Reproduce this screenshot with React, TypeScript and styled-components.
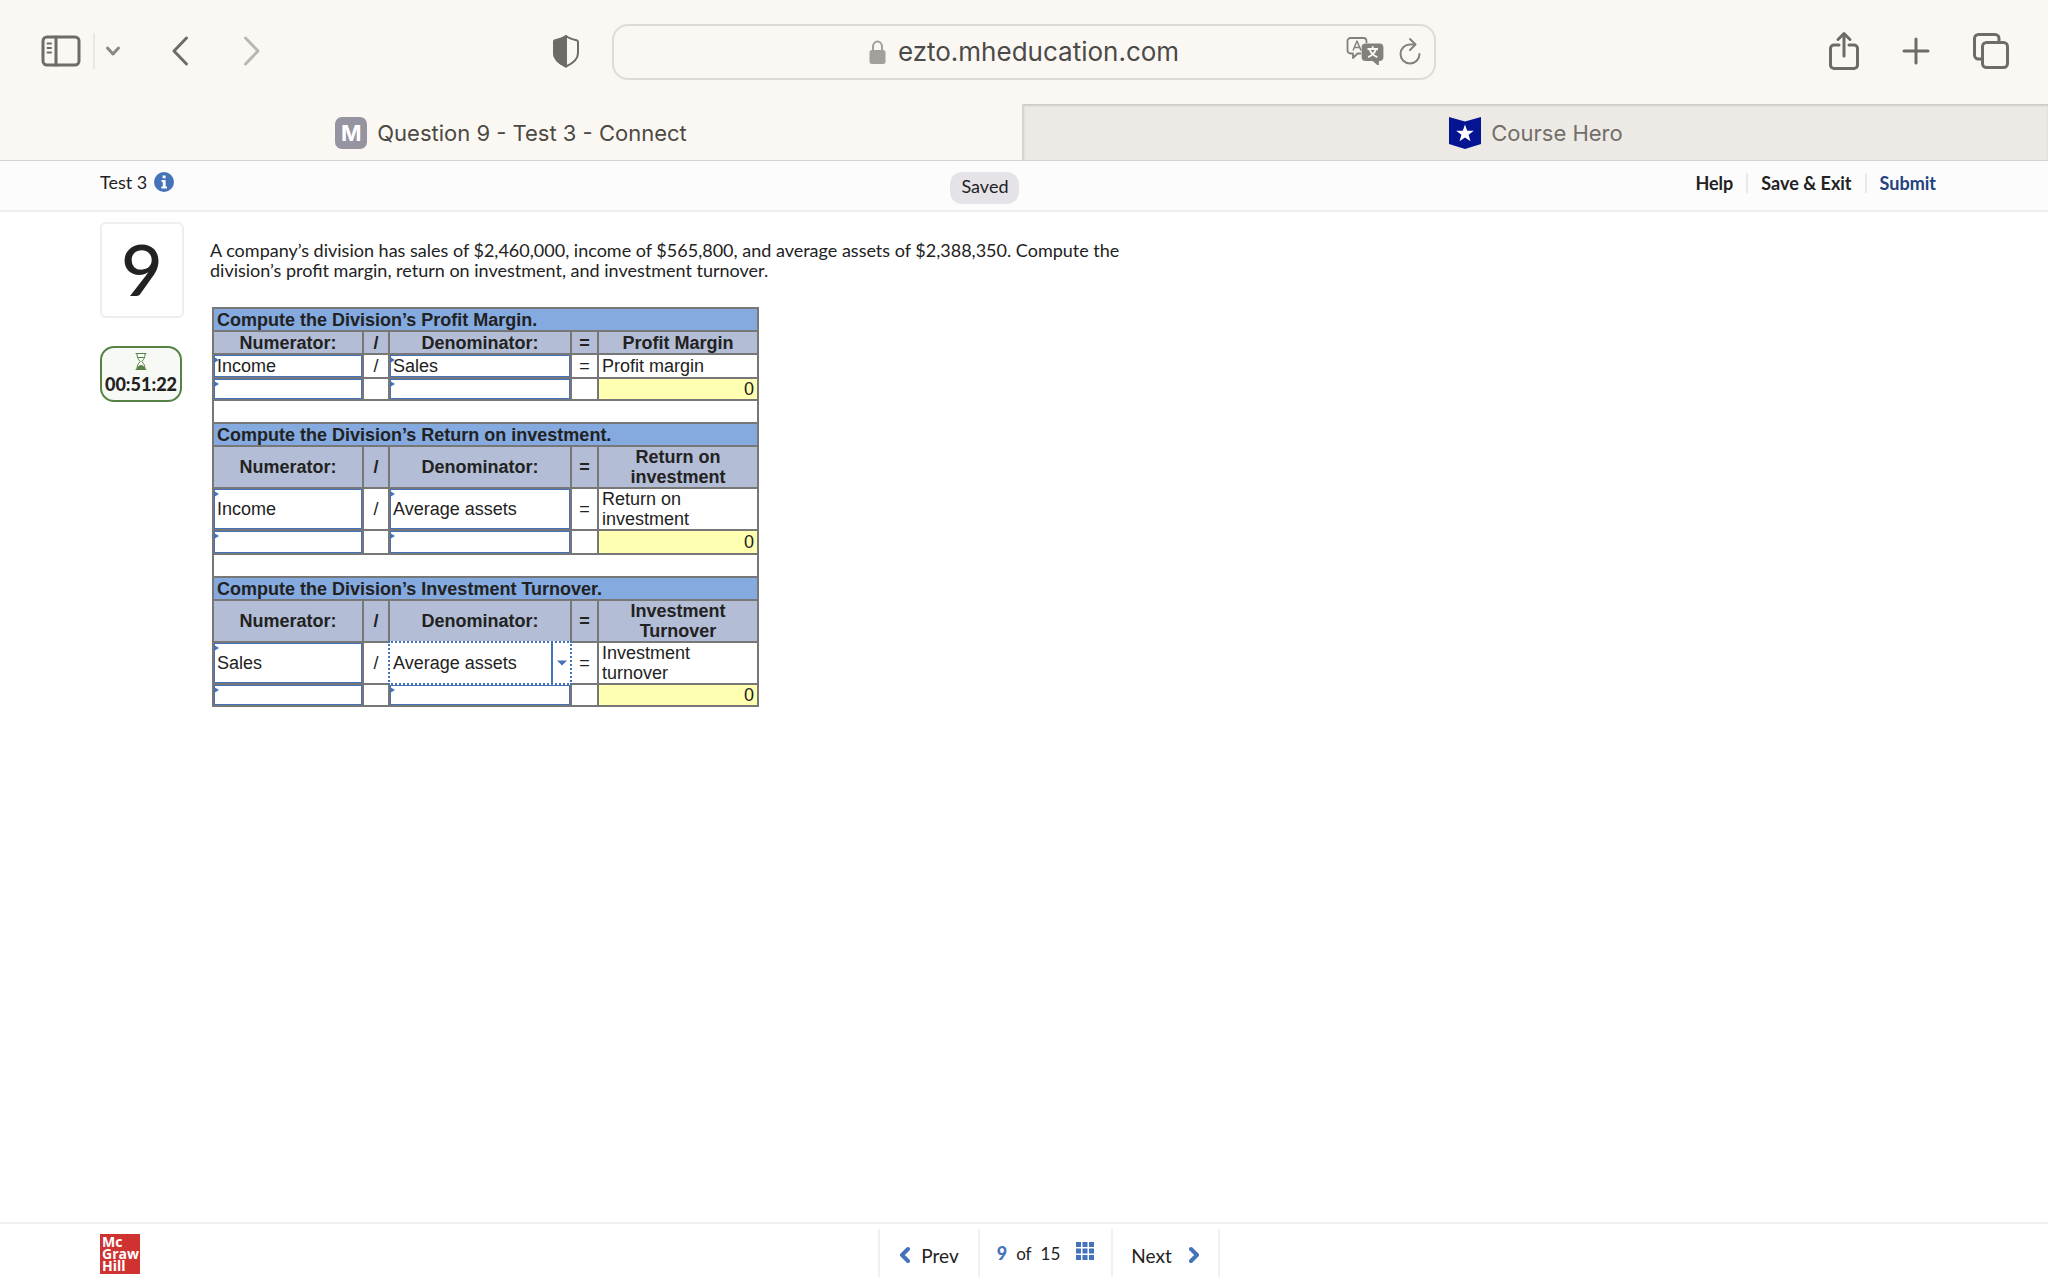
import React from 'react';
import styled, { createGlobalStyle, css } from 'styled-components';

const ui = `Inter, Roboto, "Liberation Sans", sans-serif`;
const page = `Lato, "Open Sans", sans-serif`;
const sheet = `"Liberation Sans", Arial, sans-serif`;
const blue = '#4473b9';
const rule = '#777777';

const GlobalStyle = createGlobalStyle`
  *, *::before, *::after { box-sizing: border-box; }
  body { margin: 0; background: #fff; color: #222; font-family: ${page}; }
  button, input, select { font: inherit; color: inherit; margin: 0; }
  button { background: none; border: 0; padding: 0; cursor: pointer; }
  svg { display: block; flex: none; }
`;

const Window = styled.div`
  min-height: 100vh;
  display: flex;
  flex-direction: column;
`;

/* Browser toolbar */
const Toolbar = styled.div`
  display: grid;
  grid-template-columns: 1fr minmax(400px, 824px) 1fr;
  align-items: center;
  height: 104px;
  padding: 0 38px;
  background: #fbf8f3;
  color: #6f6b66;
  font-family: ${ui};
`;

const ToolGroup = styled.div<{ $gap: number; $end?: boolean }>`
  display: flex;
  align-items: center;
  gap: ${(p) => p.$gap}px;
  ${(p) => p.$end && css`
    justify-content: flex-end;
    padding-bottom: 2px;
  `}
`;

const LeftTools = styled(ToolGroup)`
  justify-content: space-between;
  padding: 0 31px 2px 1px;
`;

const IconButton = styled.button<{ $dim?: boolean }>`
  display: flex;
  align-items: center;
  justify-content: center;
  color: inherit;
  opacity: ${(p) => (p.$dim ? 0.45 : 1)};
`;

const Bar = styled.span<{ $h: number }>`
  width: 2px;
  height: ${(p) => p.$h}px;
  background: #ebe9e6;
`;

const Address = styled.div`
  display: grid;
  grid-template-columns: 1fr auto 1fr;
  align-items: center;
  height: 56px;
  padding: 0 12px;
  border: 2px solid #dedbd6;
  border-radius: 16px;
  color: #4b4a49;
  font-size: 26px;
`;

const Site = styled.button`
  grid-column: 2;
  display: flex;
  align-items: center;
  gap: 12px;
  line-height: 32px;
`;

/* Browser tabs */
const Tabs = styled.nav`
  display: grid;
  grid-template-columns: 1022fr 1026fr;
  height: 57px;
  border-bottom: 1px solid #d6d5d3;
  background: #fbf8f3;
`;

const Tab = styled.button<{ $active?: boolean }>`
  display: flex;
  align-items: center;
  justify-content: center;
  gap: 10px;
  padding-top: 2px;
  font-family: ${ui};
  font-size: 22px;
  color: #4c4944;
  ${(p) =>
    !p.$active &&
    css`
      background: #edeae5;
      color: #726e69;
      border-left: 2px solid #d8d5d0;
      box-shadow: inset 0 2px 2px #cfccc6;
    `}
`;

const Letter = styled.span`
  display: grid;
  place-items: center;
  width: 32px;
  height: 32px;
  border-radius: 7px;
  background: #9594a0;
  color: #fff;
  font-size: 22px;
  font-weight: 700;
`;

/* Assignment header */
const Header = styled.header`
  display: grid;
  grid-template-columns: 850fr auto 916fr;
  height: 51px;
  padding: 10px 112px 0 100px;
  border-bottom: 2px solid #efefef;
  background: #fcfcfd;
  font-size: 18px;
  line-height: 22px;
`;

const Title = styled.div`
  display: flex;
  align-items: center;
  gap: 7px;
  height: 22px;
`;

const Saved = styled.div`
  height: 32px;
  margin-top: 1px;
  padding: 3px 11px;
  border-radius: 12px;
  background: #e5e3e7;
`;

const Actions = styled.nav`
  display: flex;
  align-items: center;
  justify-content: flex-end;
  gap: 13px;
  height: 24px;
`;

const Action = styled.button<{ $primary?: boolean }>`
  font-size: 18px;
  font-weight: 700;
  line-height: 24px;
  color: ${(p) => (p.$primary ? '#23427f' : '#222')};
`;

/* Question */
const Main = styled.main`
  flex: 1;
  display: flex;
  align-items: flex-start;
  gap: 26px;
  padding: 10px 100px 40px;
`;

const Side = styled.aside`
  display: flex;
  flex-direction: column;
  gap: 28px;
  width: 84px;
`;

const QuestionNumber = styled.div`
  display: flex;
  justify-content: center;
  height: 96px;
  border: 2px solid #eeeeee;
  border-radius: 6px;
  font-size: 72px;
  font-weight: 500;
  line-height: 88px;
`;

const Timer = styled.div`
  display: flex;
  flex-direction: column;
  align-items: center;
  width: 82px;
  height: 56px;
  padding-top: 4px;
  border: 2px solid #568345;
  border-radius: 14px;
  background: #f7f9f5;
  color: #568345;
`;

const Time = styled.span`
  font-size: 18px;
  font-weight: 900;
  line-height: 24px;
  color: #222;
`;

const Body = styled.div`
  flex: 1;
  padding-top: 18px;
`;

const Prompt = styled.p`
  max-width: 940px;
  margin: 0 0 27px;
  font-size: 18px;
  line-height: 20px;
`;

const Sheet = styled.table`
  width: 547px;
  margin-left: 2px;
  table-layout: fixed;
  border-collapse: collapse;
  font-family: ${sheet};
  font-size: 18px;
  line-height: 20px;

  th, td {
    padding: 0 3px;
    border: 2px solid ${rule};
  }
`;

const Col = styled.col<{ $w: number }>`
  width: ${(p) => p.$w}px;
`;

const Row = styled.tr<{ $h: number }>`
  height: ${(p) => p.$h}px;

  && > td { height: ${(p) => p.$h}px; }
`;

const Section = styled.th`
  background: #84aae0;
  text-align: left;
`;

const Heading = styled.th`
  background: #b3bdd6;
  text-align: center;
`;

const Sign = styled.td`
  text-align: center;
`;

const Result = styled.td`
  background: #ffffb1;
  text-align: right;
`;

const Entry = styled.td`
  && { padding: 0; }
`;

const Slot = styled.div<{ $focus?: boolean }>`
  position: relative;
  display: flex;
  height: 100%;
  ${(p) =>
    p.$focus
      ? css`
          padding-left: 1px;
          background: #fff;
          box-shadow: 0 0 0 2px #fff;
          outline: 2px dotted ${blue};
        `
      : css`
          border: 1px solid ${blue};

          &::before {
            content: '';
            position: absolute;
            top: 1px;
            left: -1px;
            width: 5px;
            height: 6px;
            background: ${blue};
            clip-path: polygon(0 0, 100% 50%, 0 100%);
          }
        `}
`;

const field = css`
  flex: 1;
  min-width: 0;
  height: 100%;
  padding: 0 2px;
  border: 0;
  outline: 0;
  background: transparent;
`;

const Choice = styled.select`
  ${field}
  appearance: none;
`;

const Amount = styled.input`
  ${field}
  font-size: 15px;
  line-height: 16px;
`;

const Drop = styled.span`
  display: grid;
  place-items: center;
  width: 19px;
  border-left: 2px solid ${blue};
  color: ${blue};
`;

/* Footer */
const Footer = styled.footer`
  display: grid;
  grid-template-columns: 1fr auto 1fr;
  height: 58px;
  padding: 5px 50px 0 100px;
  border-top: 2px solid #f0f0f0;
  font-size: 18px;
`;

const Logo = styled.div`
  width: 40px;
  height: 40px;
  margin-top: 5px;
  padding: 2px 2px;
  background: #cf3331;
  color: #fff;
  font-family: "Open Sans", sans-serif;
  font-size: 14px;
  font-weight: 700;
  line-height: 12px;
`;

const Pager = styled.nav`
  display: flex;
  height: 48px;
  border-left: 2px solid #f0f0f0;
`;

const PagerCell = styled.div<{ $w: number }>`
  display: flex;
  justify-content: center;
  width: ${(p) => p.$w}px;
  border-right: 2px solid #f0f0f0;
`;

const PagerButton = styled.button<{ $gap: number }>`
  display: flex;
  align-items: center;
  gap: ${(p) => p.$gap}px;
  height: 52px;
  font-size: 19px;
`;

const Position = styled.div`
  display: flex;
  align-items: center;
  gap: 9px;
  height: 48px;
  font-size: 17px;
`;

const Current = styled.b`
  color: ${blue};
  font-size: 18px;
  font-weight: 900;
`;

const GridButton = styled(IconButton)`
  margin: -4px 0 0 7px;
  color: ${blue};
`;

type IconProps = { w: number; h: number; sw?: number; children: React.ReactNode };
const Icon = ({ w, h, sw = 3, children }: IconProps) => (
  <svg width={w} height={h} viewBox={`0 0 ${w} ${h}`} fill="none" stroke="currentColor" strokeWidth={sw} strokeLinecap="round" strokeLinejoin="round" aria-hidden="true">
    {children}
  </svg>
);

type Problem = {
  title: string;
  result: string;
  label: string;
  top: string;
  bottom: string;
  heights: number[];
  focus?: boolean;
};

const problems: Problem[] = [
  { title: 'Compute the Division’s Profit Margin.', result: 'Profit Margin', label: 'Profit margin', top: 'Income', bottom: 'Sales', heights: [23, 23, 23, 22, 23] },
  { title: 'Compute the Division’s Return on investment.', result: 'Return on investment', label: 'Return on investment', top: 'Income', bottom: 'Average assets', heights: [23, 42, 42, 24, 23] },
  { title: 'Compute the Division’s Investment Turnover.', result: 'Investment Turnover', label: 'Investment turnover', top: 'Sales', bottom: 'Average assets', heights: [23, 42, 42, 22], focus: true },
];

const options = ['Income', 'Sales', 'Average assets'];

const Picker = ({ label, value, focus }: { label: string; value: string; focus?: boolean }) => (
  <Entry>
    <Slot $focus={focus}>
      <Choice aria-label={label} defaultValue={value}>
        {options.map((o) => (
          <option key={o}>{o}</option>
        ))}
      </Choice>
      {focus && (
        <Drop>
          <svg width="10" height="6" viewBox="0 0 10 6" fill="currentColor" aria-hidden="true">
            <path d="M0 0.500h10L5 5.500z" />
          </svg>
        </Drop>
      )}
    </Slot>
  </Entry>
);

const Block = ({ p }: { p: Problem }) => (
  <tbody>
    <Row $h={p.heights[0]}>
      <Section colSpan={5}>{p.title}</Section>
    </Row>
    <Row $h={p.heights[1]}>
      <Heading>Numerator:</Heading>
      <Heading>/</Heading>
      <Heading>Denominator:</Heading>
      <Heading>=</Heading>
      <Heading>{p.result}</Heading>
    </Row>
    <Row $h={p.heights[2]}>
      <Picker label={`${p.result} numerator`} value={p.top} />
      <Sign>/</Sign>
      <Picker label={`${p.result} denominator`} value={p.bottom} focus={p.focus} />
      <Sign>=</Sign>
      <td>{p.label}</td>
    </Row>
    <Row $h={p.heights[3]}>
      <Entry>
        <Slot><Amount aria-label={`${p.result} numerator amount`} /></Slot>
      </Entry>
      <Sign />
      <Entry>
        <Slot><Amount aria-label={`${p.result} denominator amount`} /></Slot>
      </Entry>
      <Sign />
      <Result>0</Result>
    </Row>
    {p.heights[4] && (
      <Row $h={p.heights[4]}>
        <td colSpan={5} />
      </Row>
    )}
  </tbody>
);

export default function App() {
  return (
    <Window>
      <GlobalStyle />
      <Toolbar>
        <LeftTools $gap={0}>
          <ToolGroup $gap={50}>
            <ToolGroup $gap={10}>
              <IconButton aria-label="Sidebar">
                <Icon w={44} h={34}>
                  <rect x="4" y="3" width="36" height="28" rx="4" />
                  <path d="M17 3v28" />
                  <path d="M8.500 9.500h3.500M8.500 14h3.500M8.500 18.500h3.500" strokeWidth="2" />
                </Icon>
              </IconButton>
              <Bar $h={36} />
              <IconButton aria-label="Tab groups">
                <Icon w={16} h={12}>
                  <path d="M2.500 3 8 9l5.500-6" stroke="#8b8783" />
                </Icon>
              </IconButton>
            </ToolGroup>
            <ToolGroup $gap={54}>
              <IconButton aria-label="Back">
                <Icon w={18} h={32}><path d="M15.500 3 3 16l12.500 13" /></Icon>
              </IconButton>
              <IconButton aria-label="Forward" $dim>
                <Icon w={18} h={32}><path d="M2.500 3 15 16 2.500 29" /></Icon>
              </IconButton>
            </ToolGroup>
          </ToolGroup>
          <IconButton aria-label="Privacy report">
            <Icon w={30} h={34} sw={2}>
              <path d="M15 2c3 2.500 7 3.500 10.500 4.200 1.200.3 1.500.8 1.500 1.800v11c0 7-6.500 11-12 13.500C9.500 30 3 26 3 19V8c0-1 .3-1.500 1.500-1.800C8 5.500 12 4.500 15 2z" />
              <path d="M15 2v30.500C9.500 30 3 26 3 19V8c0-1 .3-1.500 1.500-1.800C8 5.500 12 4.500 15 2z" fill="currentColor" />
            </Icon>
          </IconButton>
        </LeftTools>
        <Address>
          <Site>
            <svg width="17" height="24" viewBox="0 0 17 24" fill="none" aria-hidden="true">
              <path d="M4 11V7a4.500 5.500 0 0 1 9 0v4" stroke="#a2a09d" strokeWidth="2" />
              <rect x="0.500" y="10" width="16" height="14" rx="2.500" fill="#a2a09d" />
            </svg>
            ezto.mheducation.com
          </Site>
          <ToolGroup $gap={14} $end>
            <IconButton aria-label="Translate">
              <svg width="38" height="28" viewBox="0 0 38 28" fill="none" stroke="#83817e" strokeWidth="1.800" strokeLinejoin="round" aria-hidden="true">
                <path d="M15 16.500h-3.500L7 21v-4.500H4.500a3 3 0 0 1-3-3V4a3 3 0 0 1 3-3h13a3 3 0 0 1 3 3v2" />
                <path d="M7 13.500 11 4l4 9.500M8.300 10.500h5.400" strokeWidth="1.500" />
                <path d="M19.500 7.500h14a3 3 0 0 1 3 3V20a3 3 0 0 1-3 3H32v4.500L27 23h-7.500a3 3 0 0 1-3-3v-9.500a3 3 0 0 1 3-3z" fill="#83817e" />
                <path d="M21.500 12h10.500M26.700 9.200V12M23.500 12c1 3.500 4 6.500 7.800 8.200M30 12c-1 3.500-4 6.500-7.800 8.200" stroke="#fbf8f3" strokeWidth="1.900" />
              </svg>
            </IconButton>
            <IconButton aria-label="Reload">
              <svg width="24" height="28" viewBox="0 0 24 28" fill="none" stroke="#83817e" strokeWidth="2" strokeLinecap="round" strokeLinejoin="round" aria-hidden="true">
                <path d="M17 7.500H12A9.500 9.500 0 1 0 21.500 17" />
                <path d="M12 2l5.500 5.500L12 13" />
              </svg>
            </IconButton>
          </ToolGroup>
        </Address>
        <ToolGroup $gap={42} $end>
          <IconButton aria-label="Share">
            <Icon w={32} h={42} sw={3}>
              <path d="M11 15H6a3.500 3.500 0 0 0-3.500 3.500V35A3.500 3.500 0 0 0 6 38.500h20a3.500 3.500 0 0 0 3.500-3.500V18.500A3.500 3.500 0 0 0 26 15h-5" />
              <path d="M16 26V4M10 9.500l6-6 6 6" />
            </Icon>
          </IconButton>
          <IconButton aria-label="New tab">
            <Icon w={28} h={28}><path d="M14 2v24M2 14h24" /></Icon>
          </IconButton>
          <IconButton aria-label="Tab overview">
            <Icon w={38} h={38}>
              <path d="M9 27H6.500A4 4 0 0 1 2.500 23V6.500a4 4 0 0 1 4-4H23a4 4 0 0 1 4 4V9" />
              <rect x="10.500" y="10.500" width="25" height="25" rx="4" />
            </Icon>
          </IconButton>
        </ToolGroup>
      </Toolbar>

      <Tabs aria-label="Tabs">
        <Tab $active>
          <Letter>M</Letter>
          Question 9 - Test 3 - Connect
        </Tab>
        <Tab>
          <svg width="32" height="32" viewBox="0 0 32 32" aria-hidden="true">
            <path d="M0 0l16 4.500L32 0v27l-16 5-16-5z" fill="#051491" />
            <path d="M16 7.500l2.200 6.200h6.600l-5.200 4.100 1.900 6.500-5.500-3.900-5.500 3.900 1.900-6.500-5.200-4.100h6.600z" fill="#fff" />
          </svg>
          Course Hero
        </Tab>
      </Tabs>

      <Header>
        <Title>
          Test 3
          <IconButton aria-label="Assignment info">
            <svg width="20" height="20" viewBox="0 0 20 20" aria-hidden="true">
              <circle cx="10" cy="10" r="10" fill={blue} />
              <path d="M8.600 3.500h3v2.800h-3zM7.500 8h4.100v6.500h1.400v2H7.300v-2h1.500V10H7.500z" fill="#fff" />
            </svg>
          </IconButton>
        </Title>
        <Saved role="status">Saved</Saved>
        <Actions>
          <Action>Help</Action>
          <Bar $h={20} />
          <Action>Save &amp; Exit</Action>
          <Bar $h={20} />
          <Action $primary>Submit</Action>
        </Actions>
      </Header>

      <Main>
        <Side>
          <QuestionNumber>9</QuestionNumber>
          <Timer role="timer">
            <Icon w={14} h={20} sw={1}>
              <path d="M2 1.500h10M2 17.500h10M3 2c0 4 1 5 3.200 7.500C4 12 3 13.500 3 17M11 2c0 4-1 5-3.200 7.500C10 12 11 13.500 11 17" />
              <path d="M3 17c0-2 2-3 4-3.500 2 .5 4 1.500 4 3.500z" fill="currentColor" />
              <path d="M4.500 5.500h5" />
            </Icon>
            <Time>00:51:22</Time>
          </Timer>
        </Side>
        <Body>
          <Prompt>
            A company’s division has sales of $2,460,000, income of $565,800, and average assets of $2,388,350. Compute the
            division’s profit margin, return on investment, and investment turnover.
          </Prompt>
          <Sheet>
            <colgroup>
              <Col $w={150} />
              <Col $w={26} />
              <Col $w={182} />
              <Col $w={27} />
              <Col $w={160} />
            </colgroup>
            {problems.map((p) => (
              <Block key={p.title} p={p} />
            ))}
          </Sheet>
        </Body>
      </Main>

      <Footer>
        <Logo>Mc<br />Graw<br />Hill</Logo>
        <Pager aria-label="Questions">
          <PagerCell $w={100}>
            <PagerButton $gap={11}>
              <Icon w={11} h={18} sw={4}><path d="M9 3 3 9l6 6" stroke={blue} /></Icon>
              Prev
            </PagerButton>
          </PagerCell>
          <PagerCell $w={133}>
            <Position>
              <Current>9</Current>
              <span>of</span>
              <span>15</span>
              <GridButton aria-label="Question list">
                <svg width="18" height="18" viewBox="0 0 18 18" fill="currentColor" aria-hidden="true">
                  <path d="M0 0h5v5H0zM6.500 0h5v5h-5zM13 0h5v5h-5zM0 6.500h5v5H0zM6.500 6.500h5v5h-5zM13 6.500h5v5h-5zM0 13h5v5H0zM6.500 13h5v5h-5zM13 13h5v5h-5z" />
                </svg>
              </GridButton>
            </Position>
          </PagerCell>
          <PagerCell $w={107}>
            <PagerButton $gap={17}>
              Next
              <Icon w={11} h={18} sw={4}><path d="M2 3l6 6-6 6" stroke={blue} /></Icon>
            </PagerButton>
          </PagerCell>
        </Pager>
      </Footer>
    </Window>
  );
}
